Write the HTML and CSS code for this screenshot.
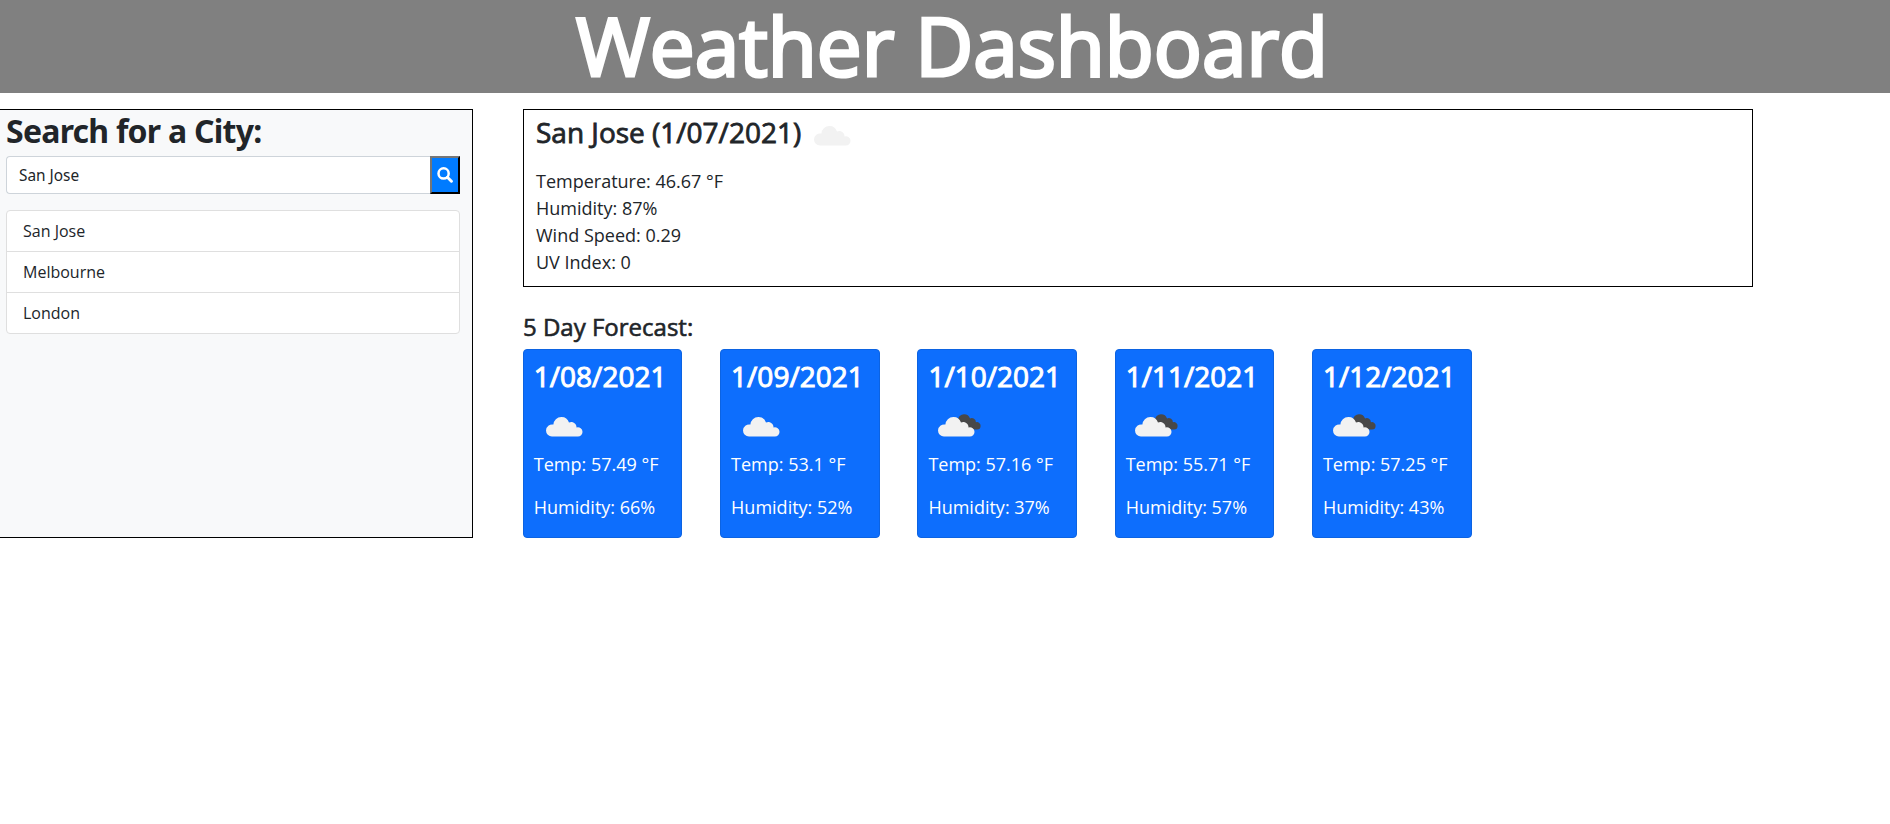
FILE: index.html
```
<!DOCTYPE html>
<html lang="en">
<head>
<meta charset="utf-8">
<title>Weather Dashboard</title>
<link rel="stylesheet" href="styles.css">
</head>
<body>
<svg class="defs" width="0" height="0">
  <symbol id="cloud" viewBox="0 0 37 20"><path d="M6 19.5a6 6 0 0 1-6-6A6.2 6.2 0 0 1 7.4 7.6 8 8 0 0 1 15.3 0a8 8 0 0 1 7.7 5.6 5.2 5.2 0 0 1 7.5 4.8A4.6 4.6 0 0 1 36.5 15a4.6 4.6 0 0 1-4.6 4.5z"/></symbol>
</svg>
<header class="banner"><h1 class="title">Weather Dashboard</h1></header>
<main class="layout">
  <aside class="sidebar">
    <h2 class="search-title">Search for a City:</h2>
    <form class="search">
      <input class="search-input" type="text" value="San Jose">
      <button class="search-btn" type="button" aria-label="Search"><svg width="16" height="16" viewBox="0 0 16 16"><circle cx="6.6" cy="6.4" r="5.1" fill="none" stroke="#fff" stroke-width="2.5"/><path d="M10.4 10.3l4 3.9" stroke="#fff" stroke-width="3" stroke-linecap="round"/></svg></button>
    </form>
    <ul class="history"><li>San Jose</li><li>Melbourne</li><li>London</li></ul>
  </aside>
  <section class="content">
    <div class="current">
      <h3 class="city"><span>San Jose (1/07/2021)</span><svg class="cloud" width="37" height="20"><use href="#cloud"/></svg></h3>
      <p>Temperature: 46.67 °F</p>
      <p>Humidity: 87%</p>
      <p>Wind Speed: 0.29</p>
      <p>UV Index: 0</p>
    </div>
    <h4 class="forecast-title">5 Day Forecast:</h4>
    <div class="forecast">
      <article class="card"><h3 class="date">1/08/2021</h3><div class="icon"><svg class="cloud" width="37" height="20"><use href="#cloud"/></svg></div><p>Temp: 57.49 °F</p><p>Humidity: 66%</p></article>
      <article class="card"><h3 class="date">1/09/2021</h3><div class="icon"><svg class="cloud" width="37" height="20"><use href="#cloud"/></svg></div><p>Temp: 53.1 °F</p><p>Humidity: 52%</p></article>
      <article class="card"><h3 class="date">1/10/2021</h3><div class="icon broken"><svg width="43" height="23"><use class="dark" href="#cloud" x="14" y="0" width="29" height="16"/><use class="cloud" href="#cloud" y="3" width="37" height="20"/></svg></div><p>Temp: 57.16 °F</p><p>Humidity: 37%</p></article>
      <article class="card"><h3 class="date">1/11/2021</h3><div class="icon broken"><svg width="43" height="23"><use class="dark" href="#cloud" x="14" y="0" width="29" height="16"/><use class="cloud" href="#cloud" y="3" width="37" height="20"/></svg></div><p>Temp: 55.71 °F</p><p>Humidity: 57%</p></article>
      <article class="card"><h3 class="date">1/12/2021</h3><div class="icon broken"><svg width="43" height="23"><use class="dark" href="#cloud" x="14" y="0" width="29" height="16"/><use class="cloud" href="#cloud" y="3" width="37" height="20"/></svg></div><p>Temp: 57.25 °F</p><p>Humidity: 43%</p></article>
    </div>
  </section>
</main>
</body>
</html>
```
FILE: styles.css
```
* { box-sizing: border-box; }
body { margin: 0; background: #fff; color: #212529; font: 18px/27px "Open Sans", sans-serif; }
h1, h2, h3, h4, p, ul { margin: 0; padding: 0; }
svg { display: block; flex: none; }
.defs { position: absolute; }
.banner { height: 93px; background: #808080; text-align: center; padding-left: 14px; }
.title { color: #fff; font-size: 80px; line-height: 90px; font-weight: 400; -webkit-text-stroke: 3.2px #fff; }
.layout { display: flex; align-items: flex-start; padding-top: 16px; }
.sidebar { width: 473px; height: 429px; background: #f8f9fa; border: 1px solid #000; border-left: 0; padding: 2px 12px 0 6px; }
.search-title { font: 700 32px/38px "Noto Sans", sans-serif; letter-spacing: -.75px; }
.search { display: flex; height: 38px; margin-top: 6px; }
.search-input { flex: 1; min-width: 0; border: 1px solid #ced4da; border-right: 0; border-radius: 4px 0 0 4px; padding: 1px 12px; color: #212529; background: #fff; font: 15.4px "Noto Sans", sans-serif; }
.search-btn { width: 30px; padding: 0 0 0 5px; background: #007bff; border: 2px outset #767676; border-color: #767676 #212121 #212121 #767676; }
.history { list-style: none; margin-top: 16px; background: #fff; border: 1px solid #dfdfdf; border-radius: 4px; font-size: 16px; }
.history li { height: 41px; line-height: 40px; padding-left: 16px; border-bottom: 1px solid #dfdfdf; }
.history li:last-child { height: 40px; border-bottom: 0; }
.content { margin-left: 50px; width: 1230px; }
.current { height: 178px; border: 1px solid #000; padding: 5px 12px; }
.city { display: flex; gap: 12.5px; font-size: 28px; line-height: 34px; font-weight: 400; -webkit-text-stroke: .8px #212529; margin-bottom: 19px; }
.city .cloud { margin-top: 11px; }
.cloud { fill: #f2f2f2; stroke: none; }
.dark { fill: #484848; }
.forecast-title { font-size: 24px; line-height: 29px; font-weight: 400; -webkit-text-stroke: .6px #212529; margin: 25px 0 8px; }
.forecast { display: flex; gap: 37.7px; margin-left: -.2px; }
.card { flex: none; width: 159.6px; height: 189px; background: #0d6efd; border: 1px solid #0c63e2; border-radius: 4px; padding: 10px 10px; color: #fff; white-space: nowrap; }
.date { font-size: 28px; line-height: 33px; margin-bottom: 1px; font-weight: 400; -webkit-text-stroke: 1px #fff; }
.icon { height: 50px; padding: 23px 0 0 12px; }
.icon.broken { padding: 20px 0 0 9.7px; }
.card p { margin-bottom: 16px; line-height: 27px; }
.icon + p { margin-top: 7px; }
```
